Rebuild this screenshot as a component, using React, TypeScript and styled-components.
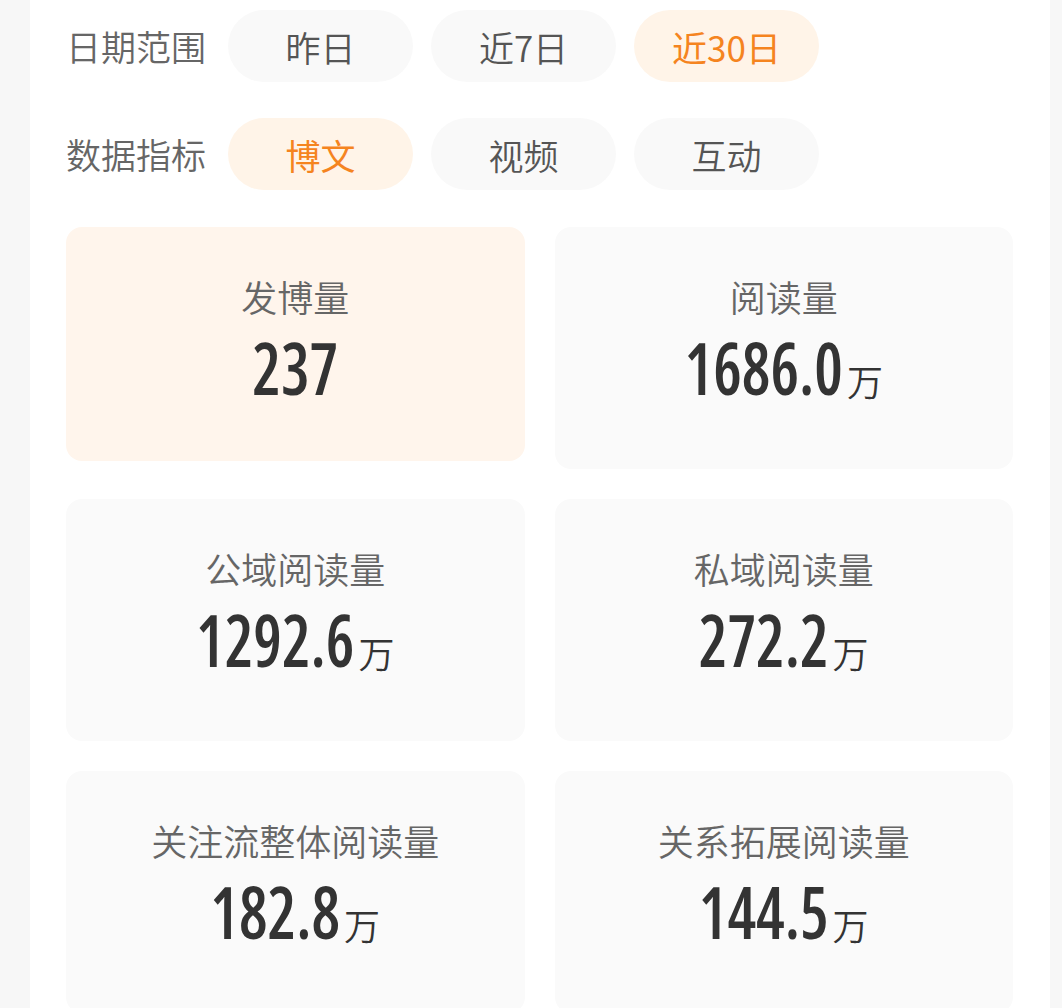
import styled, { createGlobalStyle } from 'styled-components';

const GlobalStyle = createGlobalStyle`
  body {
    margin: 0;
    background: #f7f7f7;
    font-family: "Noto Sans CJK SC", "Noto Sans", sans-serif;
  }
`;

const dateOptions = ['昨日', '近7日', '近30日'];
const metricOptions = ['博文', '视频', '互动'];

interface statType {
  label: string;
  value: string;
  unit?: string;
}

const stats: statType[] = [
  { label: '发博量', value: '237' },
  { label: '阅读量', value: '1686.0', unit: '万' },
  { label: '公域阅读量', value: '1292.6', unit: '万' },
  { label: '私域阅读量', value: '272.2', unit: '万' },
  { label: '关注流整体阅读量', value: '182.8', unit: '万' },
  { label: '关系拓展阅读量', value: '144.5', unit: '万' },
];

interface filterProps {
  title: string;
  options: string[];
  active: number;
}

const FilterRow = ({ title, options, active }: filterProps) => {
  return (
    <Filter>
      <FilterTitle>{title}</FilterTitle>
      <Chips>
        {options.map((opt, index) => (
          <Chip key={index} $active={index === active}>
            {opt}
          </Chip>
        ))}
      </Chips>
    </Filter>
  );
};

const App = () => {
  return (
    <>
      <GlobalStyle />
      <Panel>
        <Filters>
          <FilterRow title="日期范围" options={dateOptions} active={2} />
          <FilterRow title="数据指标" options={metricOptions} active={0} />
        </Filters>
        <CardGrid>
          {stats.map((stat, index) => (
            <Card key={index} $active={index === 0}>
              <CardLabel>{stat.label}</CardLabel>
              <ValueRow>
                <Number>{stat.value}</Number>
                {stat.unit && <Unit>{stat.unit}</Unit>}
              </ValueRow>
            </Card>
          ))}
        </CardGrid>
      </Panel>
    </>
  );
};

const Panel = styled.div`
  margin-left: 30px;
  width: 1020px;
  min-height: 100vh;
  box-sizing: border-box;
  background: #fff;
  padding: 10px 37px 0 36px;
`;

const Filters = styled.div`
  display: flex;
  flex-direction: column;
  gap: 36px;
`;

const Filter = styled.div`
  display: flex;
  align-items: center;
`;

const FilterTitle = styled.div`
  width: 142px;
  margin-right: 20px;
  font-size: 35px;
  font-weight: 350;
  line-height: 44px;
  color: #666;
  white-space: nowrap;
`;

const Chips = styled.div`
  display: flex;
  gap: 18px;
`;

const Chip = styled.div<{ $active: boolean }>`
  width: 185px;
  height: 72px;
  border-radius: 36px;
  display: flex;
  align-items: center;
  justify-content: center;
  font-size: 35px;
  font-weight: ${(p) => (p.$active ? 400 : 350)};
  color: ${(p) => (p.$active ? '#f5841f' : '#555')};
  background: ${(p) => (p.$active ? '#fff4e8' : '#f9f9f9')};
`;

const CardGrid = styled.div`
  margin-top: 37px;
  display: grid;
  grid-template-columns: 1fr 1fr;
  column-gap: 30px;
  row-gap: 30px;
  align-items: start;
`;

const Card = styled.div<{ $active: boolean }>`
  height: ${(p) => (p.$active ? 234 : 242)}px;
  box-sizing: border-box;
  padding-top: 47px;
  border-radius: 16px;
  background: ${(p) => (p.$active ? '#fff5ec' : '#fafafa')};
  display: flex;
  flex-direction: column;
  align-items: center;
`;

const CardLabel = styled.div`
  font-size: 36px;
  font-weight: 350;
  line-height: 44px;
  color: #666;
  white-space: nowrap;
`;

const ValueRow = styled.div`
  margin-top: 22px;
  display: flex;
  align-items: baseline;
  color: #333;
`;

const Number = styled.span`
  display: inline-block;
  font-family: "Open Sans", "Roboto Condensed", sans-serif;
  font-stretch: 75%;
  font-weight: 650;
  font-size: 64px;
  line-height: 1;
  transform: scaleY(1.134);
  transform-origin: 50% 100%;
`;

const Unit = styled.span`
  margin-left: 4px;
  font-size: 36px;
  font-weight: 350;
  line-height: 1;
`;

export default App;
